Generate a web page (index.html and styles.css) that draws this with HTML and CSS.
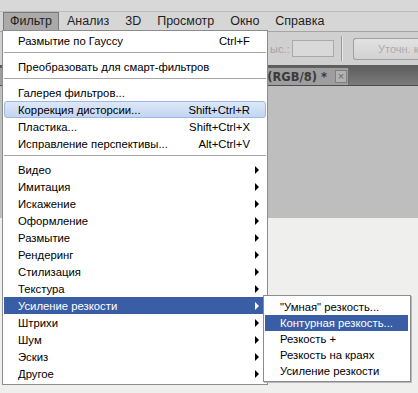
FILE: index.html
```html
<!DOCTYPE html>
<html lang="ru">
<head>
  <meta charset="UTF-8" />
  <title>Фильтр</title>
  <link rel="stylesheet" href="styles.css">
</head>
<body>
  <div class="app">
    <div class="title-strip"></div>
    <div class="menubar">
      <span class="menubar-item active">Фильтр</span>
      <span class="menubar-item">Анализ</span>
      <span class="menubar-item">3D</span>
      <span class="menubar-item">Просмотр</span>
      <span class="menubar-item">Окно</span>
      <span class="menubar-item">Справка</span>
    </div>

    <div class="options-bar">
      <div class="options-spacer"></div>
      <span class="faded-label">ыс.:</span>
      <span class="faded-input"></span>
      <span class="options-sep"></span>
      <span class="faded-button">Уточн. к</span>
    </div>

    <div class="tab-bar">
      <div class="doc-tab">
        <span class="doc-title">(RGB/8) *</span>
        <span class="doc-close">×</span>
      </div>
    </div>

    <div class="canvas-gray"></div>
    <div class="canvas-light"></div>

    <!-- dropdown: Фильтр -->
    <div class="menu main-menu">
      <div class="item"><span>Размытие по Гауссу</span><span class="hotkey">Ctrl+F</span></div>
      <div class="sep"></div>
      <div class="item"><span>Преобразовать для смарт-фильтров</span></div>
      <div class="sep"></div>
      <div class="item"><span>Галерея фильтров...</span></div>
      <div class="item hover"><span>Коррекция дисторсии...</span><span class="hotkey">Shift+Ctrl+R</span></div>
      <div class="item"><span>Пластика...</span><span class="hotkey">Shift+Ctrl+X</span></div>
      <div class="item"><span>Исправление перспективы...</span><span class="hotkey">Alt+Ctrl+V</span></div>
      <div class="sep"></div>
      <div class="item sub"><span>Видео</span></div>
      <div class="item sub"><span>Имитация</span></div>
      <div class="item sub"><span>Искажение</span></div>
      <div class="item sub"><span>Оформление</span></div>
      <div class="item sub"><span>Размытие</span></div>
      <div class="item sub"><span>Рендеринг</span></div>
      <div class="item sub"><span>Стилизация</span></div>
      <div class="item sub"><span>Текстура</span></div>
      <div class="item sub selected"><span>Усиление резкости</span></div>
      <div class="item sub"><span>Штрихи</span></div>
      <div class="item sub"><span>Шум</span></div>
      <div class="item sub"><span>Эскиз</span></div>
      <div class="item sub"><span>Другое</span></div>
    </div>

    <!-- submenu: Усиление резкости -->
    <div class="menu sub-menu">
      <div class="item"><span>"Умная" резкость...</span></div>
      <div class="item selected"><span>Контурная резкость...</span></div>
      <div class="item"><span>Резкость +</span></div>
      <div class="item"><span>Резкость на краях</span></div>
      <div class="item"><span>Усиление резкости</span></div>
    </div>
  </div>
</body>
</html>
```

FILE: styles.css
```css
body {
  margin: 0;
  padding: 0;
  font-family: 'Liberation Sans', Arial, sans-serif;
  background: #d4d4d4;
}
.app {
  position: relative;
  width: 418px;
  height: 393px;
  overflow: hidden;
  background: #efefed;
}
.title-strip {
  height: 11px;
  background: #d8d8d8;
  border-bottom: 1px solid #bcbcbc;
}
.menubar {
  display: flex;
  align-items: center;
  height: 19px;
  background: #d6d6d6;
  border-bottom: 1px solid #a4a4a4;
  font-size: 12.5px;
  color: #1e1e1e;
}
.menubar-item {
  padding: 0 8px;
  line-height: 17px;
}
.menubar-item.active {
  margin-left: 3px;
  padding: 0 6px;
  background: #aaaaaa;
  border: 1px solid #7a7a7a;
}

/* options bar */
.options-bar {
  display: flex;
  align-items: center;
  height: 33px;
  background: #d0d0d0;
  font-size: 11px;
}
.options-spacer {
  flex-shrink: 0;
  width: 270px;
}
.faded-label {
  flex-shrink: 0;
  width: 22px;
  color: #a3a3a3;
}
.faded-input {
  flex-shrink: 0;
  width: 40px;
  height: 15px;
  border: 1px solid #a9a9a9;
  background: #d9d9d9;
}
.options-sep {
  flex-shrink: 0;
  width: 1px;
  height: 25px;
  margin: 0 10px 0 7px;
  background: #9a9a9a;
  border-right: 1px solid #e6e6e6;
}
.faded-button {
  flex: 1;
  min-width: 0;
  overflow: hidden;
  height: 20px;
  line-height: 20px;
  padding-left: 24px;
  border: 1px solid #a0a0a0;
  border-right: none;
  border-radius: 3px 0 0 3px;
  background: linear-gradient(#e2e2e2, #d2d2d2);
  color: #ababab;
  white-space: nowrap;
}

/* document tabs */
.tab-bar {
  display: flex;
  height: 21px;
  padding-top: 3px;
  box-sizing: border-box;
  background: linear-gradient(#5c5c5c, #7b7b7b);
  border-bottom: 1px solid #4e4e4e;
}
.doc-tab {
  display: flex;
  align-items: center;
  justify-content: flex-end;
  width: 349px;
  padding-right: 1px;
  box-sizing: border-box;
  background: #9e9e9e;
  border-right: 1px solid #6a6a6a;
}
.doc-title {
  font-family: 'DejaVu Sans', sans-serif;
  font-size: 11.5px;
  font-weight: bold;
  color: #3a3a3a;
  margin-right: 8px;
}
.doc-close {
  width: 10px;
  height: 11px;
  line-height: 10px;
  text-align: center;
  font-size: 11px;
  color: #6a6a6a;
  border: 1px solid #808080;
  background: #b2b2b2;
}
.canvas-gray {
  height: 132px;
  background: #bebebe;
}
.canvas-light {
  height: 175px;
  background: #efefed;
}

/* menus */
.menu {
  position: absolute;
  background: #ffffff;
  border: 1px solid #8c8c8c;
  font-size: 11.3px;
  color: #000;
}
.main-menu {
  left: 2px;
  top: 30px;
  width: 264px;
  padding: 1px 0 2px;
}
.sub-menu {
  left: 263px;
  top: 295px;
  width: 146px;
  padding: 3px 0 2px;
  box-shadow: 1px 1px 0 #b8b8b8;
}
.item {
  position: relative;
  display: flex;
  justify-content: space-between;
  align-items: center;
  height: 17px;
  margin: 0 1px;
  padding: 0 16px 0 14px;
  white-space: nowrap;
}
.sub-menu .item {
  height: 16px;
  padding-left: 15px;
  margin: 0 2px 0 1px;
}
.sep {
  height: 9px;
  margin: 0 1px;
  box-sizing: border-box;
  border-top: 3px solid #fff;
  background: linear-gradient(#a6a6a6 0, #a6a6a6 1px, #fff 1px);
}
.item.sub::after {
  content: '';
  position: absolute;
  right: 7px;
  top: 5px;
  border-left: 4px solid #000;
  border-top: 4px solid transparent;
  border-bottom: 4px solid transparent;
}
.item.hover {
  border: 1px solid #9db8e2;
  border-radius: 3px;
  padding: 0 15px 0 13px;
  height: 15px;
  background: linear-gradient(#dde8f8, #c3d5f1);
}
.item.selected {
  background: #3a5ea6;
  color: #fff;
}
.item.sub.selected::after {
  border-left-color: #fff;
}
```
